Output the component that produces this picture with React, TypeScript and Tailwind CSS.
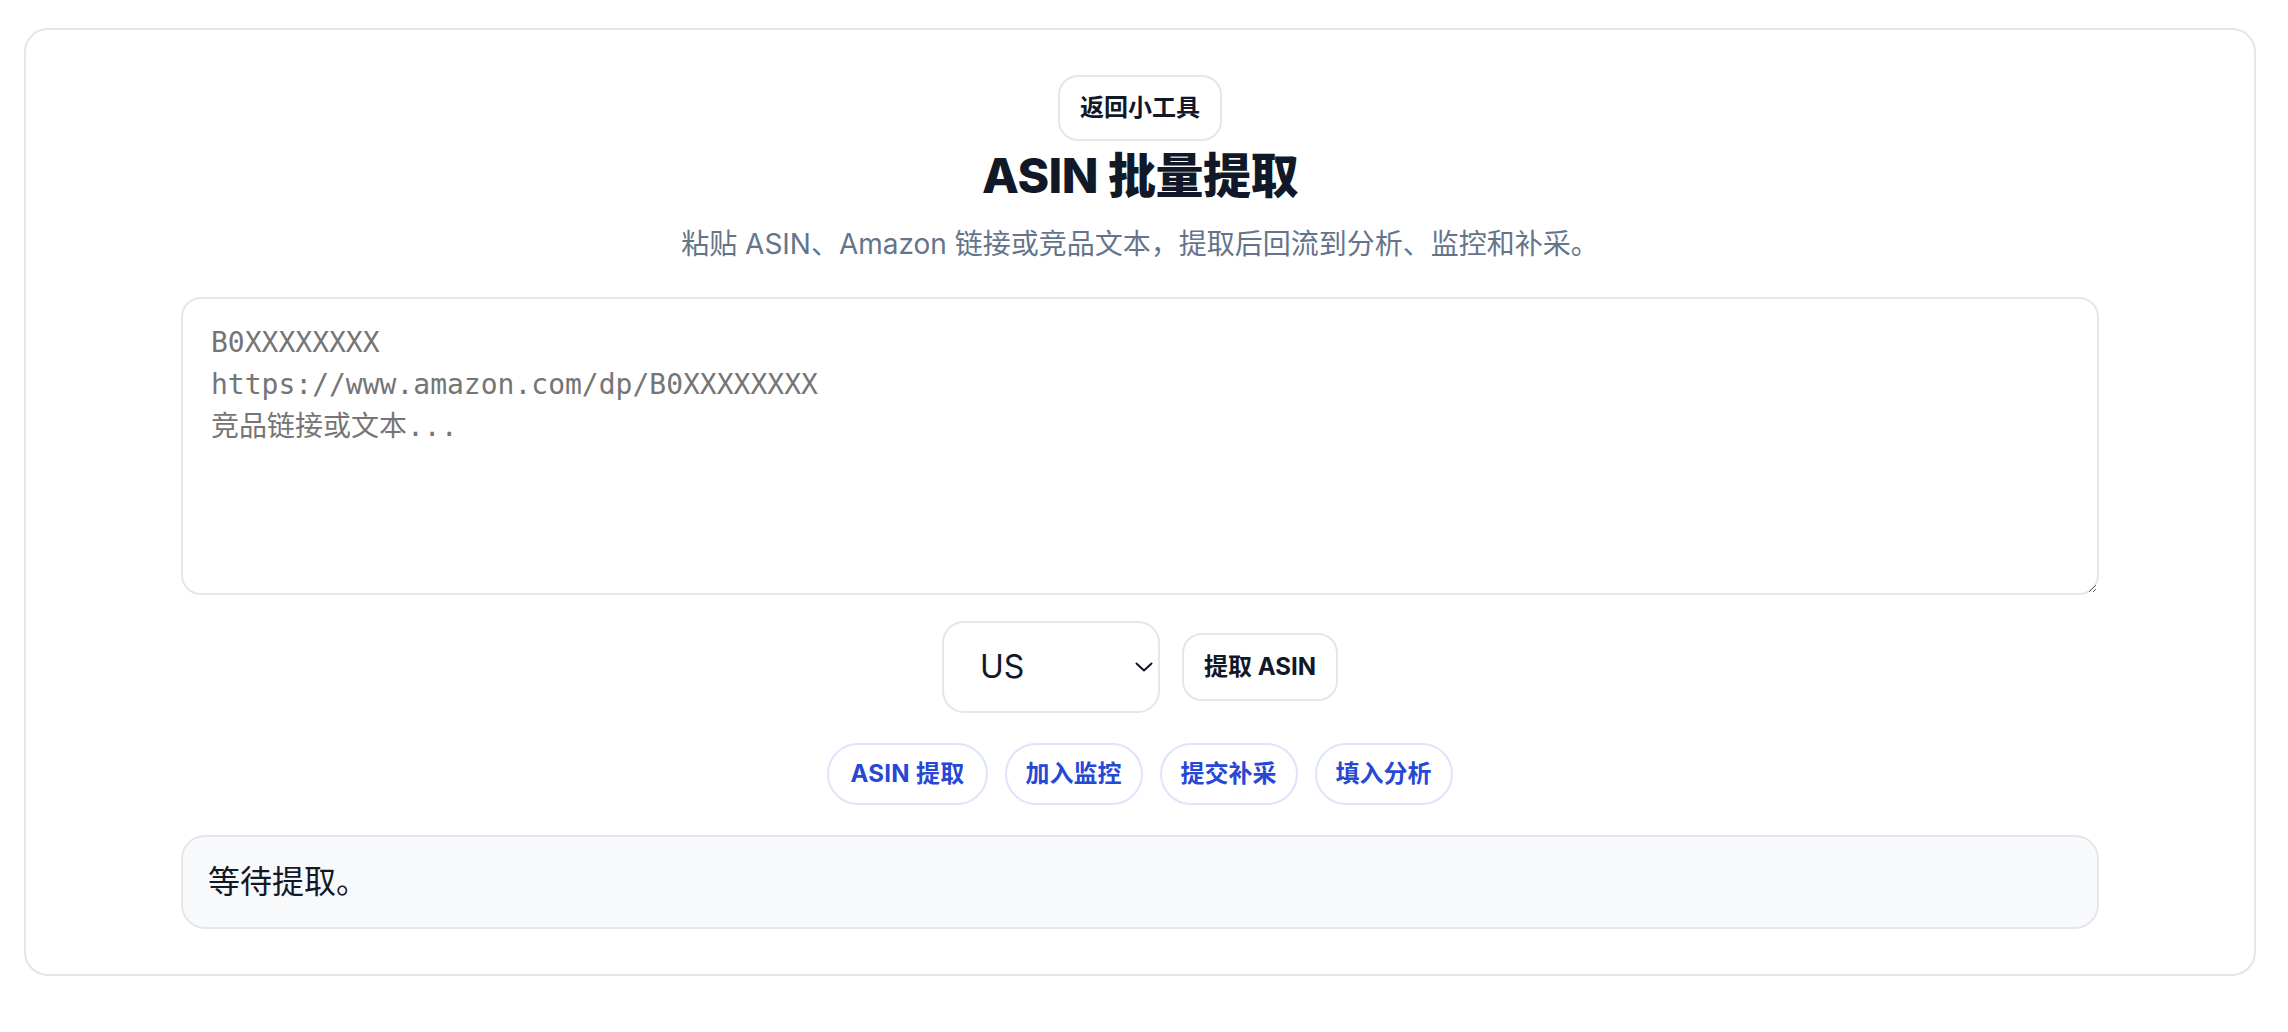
import React, { useState } from 'react';

const sans = { fontFamily: 'Inter, "Noto Sans CJK SC", "Noto Sans", sans-serif' };
const mono = { fontFamily: '"DejaVu Sans Mono", "Noto Sans CJK SC", monospace' };

const actions = ['ASIN 提取', '加入监控', '提交补采', '填入分析'];

const ChevronDown: React.FC = () => (
  <svg width="18" height="10" viewBox="0 0 18 10" fill="none" className="pointer-events-none absolute right-[7px] top-1/2 -translate-y-1/2">
    <path d="M1.5 1.5 L9 8.5 L16.5 1.5" stroke="#111827" strokeWidth="2" strokeLinecap="round" strokeLinejoin="round" />
  </svg>
);

export default function App() {
  const [market, setMarket] = useState('US');
  const [text, setText] = useState('');

  return (
    <div className="min-h-screen bg-white pt-[28px] pl-[24px]" style={sans}>
      <div className="w-[2232px] rounded-[24px] border-2 border-[#e5e6eb] bg-white pt-[45px] pb-[45px]">
        <div className="mx-auto flex w-full max-w-[1918px] flex-col items-center">
          {/* header */}
          <button className="rounded-[20px] border-2 border-[#e5e6eb] bg-white px-[20px] py-[14px] text-[24px] leading-[34px] font-bold text-[#111827]">
            返回小工具
          </button>
          <h1 className="mt-[6px] text-[48px] leading-[58px] font-extrabold tracking-[-0.5px] text-[#111827]">
            ASIN 批量提取
          </h1>
          <p className="mt-[18px] text-[28px] leading-[42px] text-[#64748b]">
            粘贴 ASIN、Amazon 链接或竞品文本，提取后回流到分析、监控和补采。
          </p>

          {/* input */}
          <textarea
            value={text}
            onChange={(e) => setText(e.target.value)}
            placeholder={'B0XXXXXXXX\nhttps://www.amazon.com/dp/B0XXXXXXXX\n竞品链接或文本...'}
            className="mt-[32px] h-[298px] w-full rounded-[20px] border-2 border-[#e5e6eb] bg-white px-[28px] py-[23px] text-[28px] leading-[42px] text-[#111827] outline-none placeholder:text-[#757575]"
            style={mono}
          />

          {/* controls */}
          <div className="mt-[26px] flex items-center gap-[22px]">
            <div className="relative">
              <select
                value={market}
                onChange={(e) => setMarket(e.target.value)}
                className="h-[92px] w-[218px] appearance-none rounded-[22px] border-2 border-[#e5e6eb] bg-white pl-[36px] text-[32px] text-[#111827] outline-none"
                style={sans}
              >
                <option>US</option>
                <option>UK</option>
                <option>DE</option>
                <option>JP</option>
              </select>
              <ChevronDown />
            </div>
            <button className="h-[68px] rounded-[20px] border-2 border-[#e5e6eb] bg-white px-[20px] text-[24px] font-bold text-[#111827]">
              提取 ASIN
            </button>
          </div>

          {/* quick actions */}
          <div className="mt-[30px] flex items-center gap-[17px]">
            {actions.map((a, i) => (
              <button
                key={a}
                className={`rounded-full border-2 border-[#dde5fa] bg-white py-[12px] text-[24px] leading-[34px] font-bold text-[#2748d4] ${i === 0 ? 'px-[21px] tracking-[0.3px]' : 'px-[19px]'}`}
              >
                {a}
              </button>
            ))}
          </div>

          {/* status */}
          <div className="mt-[30px] w-full rounded-[24px] border-2 border-[#e5e6eb] bg-[#f8f9fb] px-[25px] py-[21px] text-[32px] leading-[48px] text-[#111827]">
            等待提取。
          </div>
        </div>
      </div>
    </div>
  );
}
